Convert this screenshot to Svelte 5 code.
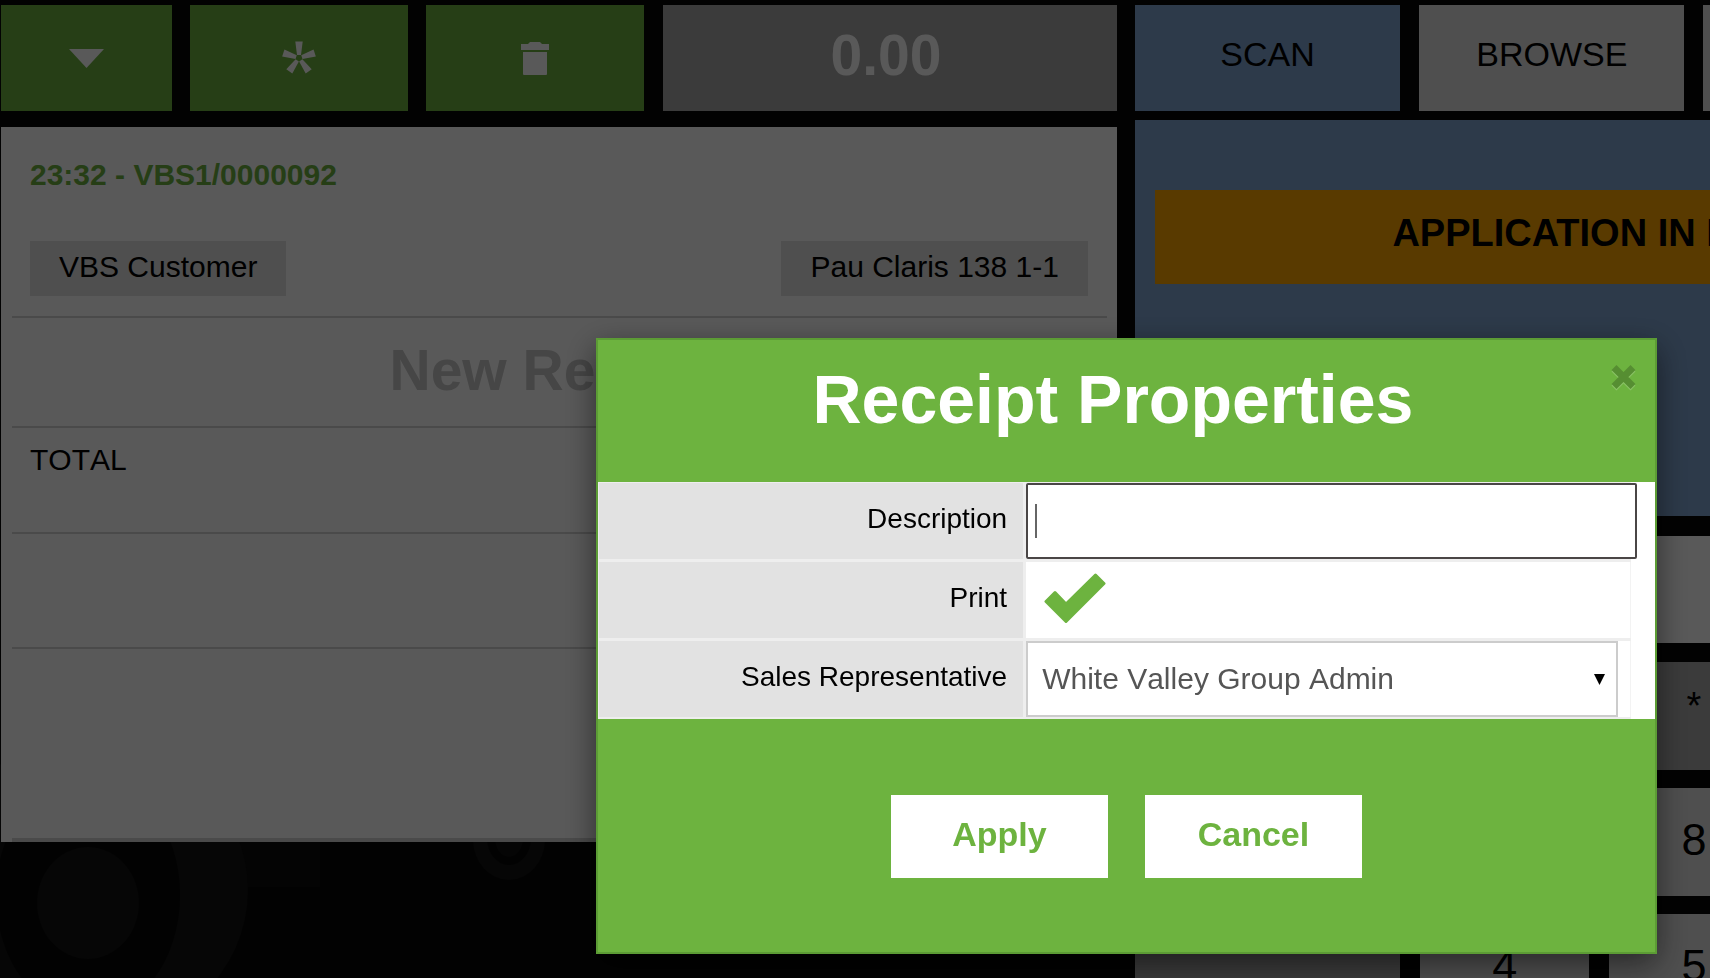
<script lang="ts">
	const tabs = ['SCAN', 'BROWSE', 'SEARCH', 'EDIT'];

	// null keeps a free slot in the grid
	const keys = [
		{ label: null, dark: true },
		{ label: null, dark: true },
		{ label: '*', dark: true },
		{ label: null, dark: true },
		{ label: null, dark: true },
		{ label: null, dark: true },
		{ label: '7' },
		{ label: '8' },
		{ label: '9' },
		{ label: null, dark: true },
		{ label: null, dark: true },
		{ label: '4' },
		{ label: '5' },
		{ label: '6' },
		{ label: null, dark: true }
	];

	let activeTab = $state('SCAN');
	let modalOpen = $state(true);
	let description = $state('');
	let print = $state(true);
	let representative = $state('White Valley Group Admin');

	function closeModal() {
		modalOpen = false;
	}
</script>

<div class="pos">
	<!-- faint pattern on the page background -->
	<svg class="pattern" width="700" height="978" viewBox="0 0 700 978" aria-hidden="true">
		<path d="M36 842h284v45H36z" fill="#0c0c0c" />
		<ellipse cx="88" cy="890" rx="160" ry="150" fill="#121212" />
		<ellipse cx="88" cy="895" rx="92" ry="120" fill="#070707" />
		<ellipse cx="88" cy="903" rx="51" ry="56" fill="#121212" />
		<ellipse cx="509" cy="840" rx="36" ry="40" fill="#121212" />
		<ellipse cx="509" cy="838" rx="22" ry="27" fill="#070707" />
		<ellipse cx="509" cy="838" rx="14" ry="19" fill="#101010" />
	</svg>

	<section class="left">
		<div class="toolbar">
			<button class="action" aria-label="Menu">
				<svg width="35" height="19" viewBox="0 0 35 19"><path d="M0 0h35L17.500 19z" fill="#fff" /></svg>
			</button>
			<button class="action" aria-label="New receipt">
				<svg width="34" height="34" viewBox="-17 -17 34 34" fill="#fff">
					{#each [0, 72, 144, 216, 288] as angle}
						<path d="M-2 -3L-3.700 -16.500H3.700L2 -3z" transform="rotate({angle})" />
					{/each}
				</svg>
			</button>
			<button class="action" aria-label="Delete receipt">
				<svg width="28" height="33" viewBox="0 0 28 33" fill="#fff">
					<path d="M0 2h7l2-2h10l2 2h7v6H0z" />
					<path d="M2 10h24v22a1 1 0 0 1-1 1H3a1 1 0 0 1-1-1z" />
				</svg>
			</button>
			<div class="amount">0.00</div>
		</div>

		<div class="receipt">
			<div class="line head">
				<div class="number">23:32 - VBS1/0000092</div>
				<div class="tags">
					<button class="tag">VBS Customer</button>
					<button class="tag">Pau Claris 138 1-1</button>
				</div>
			</div>
			<div class="line empty">New Receipt</div>
			<div class="line total">TOTAL</div>
			<div class="line taxes"></div>
			<div class="line payments"></div>
		</div>
	</section>

	<section class="right">
		<div class="tabs">
			{#each tabs as tab}
				<button class="tab" class:active={activeTab === tab} onclick={() => (activeTab = tab)}>
					{tab}
				</button>
			{/each}
		</div>
		<div class="scan">
			<div class="notice">APPLICATION IN DEVELOPMENT</div>
		</div>
		<div class="display"></div>
		<div class="keypad">
			{#each keys as key}
				<button class="key" class:dark={key.dark}>{key.label ?? ''}</button>
			{/each}
		</div>
	</section>
</div>

{#if modalOpen}
	<div class="scrim"></div>
	<div class="modal" role="dialog" aria-labelledby="modal-title">
		<header>
			<h1 id="modal-title">Receipt Properties</h1>
			<button class="close" aria-label="Close" onclick={closeModal}>
				<svg width="27" height="28" viewBox="0 0 27 28" fill="none" stroke-width="7">
					<path d="M4 5L23 24M23 5L4 24" stroke="#fff" />
					<path d="M4 3.500L23 22.500M23 3.500L4 22.500" stroke="#000" />
				</svg>
			</button>
		</header>
		<div class="body">
			<table>
				<tbody>
					<tr>
						<th><label for="description">Description</label></th>
						<td>
							<div class="field">
								<input id="description" type="text" bind:value={description} />
								{#if !description}<span class="caret"></span>{/if}
							</div>
						</td>
					</tr>
					<tr>
						<th><label for="print">Print</label></th>
						<td>
							<div class="check">
								<input id="print" type="checkbox" bind:checked={print} />
								{#if print}
									<svg width="62" height="51" viewBox="0 0 62 51" aria-hidden="true">
										<path
											d="M2 28.500L11 19.500L22 31L51.500 2L60 10.500L22 48.500z"
											fill="#6db33f"
											stroke="#6db33f"
											stroke-width="3"
											stroke-linejoin="round"
										/>
									</svg>
								{/if}
							</div>
						</td>
					</tr>
					<tr>
						<th><label for="representative">Sales Representative</label></th>
						<td>
							<div class="picker">
								<select id="representative" bind:value={representative}>
									<option>White Valley Group Admin</option>
								</select>
								<svg width="11" height="11" viewBox="0 0 11 11" aria-hidden="true">
									<path d="M0 0h11L5.500 11z" />
								</svg>
							</div>
						</td>
					</tr>
				</tbody>
			</table>
		</div>
		<footer>
			<button class="confirm" onclick={closeModal}>Apply</button>
			<button class="confirm" onclick={closeModal}>Cancel</button>
		</footer>
	</div>
{/if}

<style>
	:global(body) {
		background: #000;
		overflow: hidden;
	}

	.pos,
	.modal {
		font-family: 'Liberation Sans', Arial, Helvetica, sans-serif;
		font-size: 30px;
		font-kerning: none;
		color: #000;
	}

	button,
	input,
	select {
		box-sizing: border-box;
		margin: 0;
		padding: 0;
		border: 0;
		border-radius: 0;
		font-family: inherit;
		font-kerning: inherit;
		color: inherit;
	}

	/* the right half runs on past the window's edge */
	.pos {
		position: relative;
		display: grid;
		grid-template-columns: 65.26vw 65.38vw;
		gap: 18px;
		box-sizing: border-box;
		height: 100vh;
		padding: 5px 0 0 1px;
		overflow: hidden;
		background: #070707;
	}

	.pattern {
		position: absolute;
		left: 0;
		bottom: 0;
	}

	.left,
	.right {
		position: relative;
		min-width: 0;
	}

	/* left side */
	.toolbar {
		display: grid;
		grid-template-columns: 171fr 218fr 218fr 455fr;
		gap: 18px;
		height: 106px;
		margin-bottom: 16px;
	}

	.action,
	.amount {
		display: flex;
		align-items: center;
		justify-content: center;
	}

	.action {
		background: #6db33f;
	}

	.amount {
		padding: 0 8px 6px 0;
		margin-left: 1px;
		background: #a9a9a9;
		color: #fff;
		font-size: 57px;
		font-weight: bold;
	}

	.receipt {
		padding: 0 10px 0 11px;
		background: #fff;
	}

	.line {
		padding: 0 19px 0 18px;
		border-bottom: 2px solid #d3d3d3;
	}

	.head {
		padding-top: 28px;
		padding-bottom: 20px;
	}

	.number {
		margin-bottom: 46px;
		line-height: 40px;
		font-weight: bold;
		color: #6db33f;
	}

	.tags {
		display: flex;
		justify-content: space-between;
	}

	.tag {
		padding: 0 29px 4px;
		background: #e2e2e2;
		font-size: 30px;
		line-height: 51px;
	}

	.empty {
		padding-bottom: 4px;
		line-height: 104px;
		text-align: center;
		font-size: 57px;
		font-weight: bold;
		color: #c8c8c8;
	}

	.total {
		padding-top: 12px;
		padding-bottom: 52px;
		line-height: 40px;
	}

	.taxes {
		height: 113px;
	}

	.payments {
		height: 189px;
		border-bottom-width: 4px;
	}

	/* right side */
	.tabs {
		display: grid;
		grid-template-columns: repeat(4, 1fr);
		gap: 19px;
		height: 106px;
		margin-bottom: 9px;
	}

	.tab {
		padding-bottom: 8px;
		background: #e2e2e2;
		font-size: 34px;
	}

	.tab.active {
		background: #81a6d3;
	}

	.scan {
		height: 326px;
		padding: 70px 20px 0;
		margin-bottom: 20px;
		background: #81a6d3;
	}

	.notice {
		padding-bottom: 8px;
		background: #ffa500;
		font-size: 38px;
		font-weight: bold;
		font-kerning: normal;
		line-height: 86px;
		text-align: center;
		white-space: nowrap;
	}

	.display {
		height: 107px;
		margin-bottom: 19px;
		background: #fff;
	}

	.keypad {
		display: grid;
		grid-template-columns: 265fr 169fr 169fr 169fr 265fr;
		grid-auto-rows: 108px;
		gap: 18px 20px;
	}

	.key {
		padding-bottom: 4px;
		background: #e2e2e2;
		font-size: 45px;
	}

	.key.dark {
		padding-bottom: 20px;
		background: #a9a9a9;
		font-size: 38px;
	}

	/* dialog */
	.scrim {
		position: fixed;
		inset: 0;
		background: rgba(0, 0, 0, 0.65);
	}

	.modal {
		position: fixed;
		top: 338px;
		left: 34.85vw;
		box-sizing: border-box;
		width: 62.05vw;
		border: 2px solid #5c9c35;
		background: #6db33f;
		box-shadow: 0 10px 30px rgba(0, 0, 0, 0.5);
	}

	header {
		display: flex;
		align-items: flex-start;
		padding: 13px 18px 37px;
	}

	h1 {
		flex: 1;
		margin: 0;
		color: #fff;
		font-size: 68px;
		line-height: 92px;
		text-align: center;
	}

	.close {
		display: flex;
		padding-top: 11px;
		background: none;
		opacity: 0.2;
	}

	.body {
		padding-right: 24px;
		background: #fff;
	}

	table {
		width: 100%;
		border-collapse: collapse;
		table-layout: fixed;
	}

	th,
	td {
		box-sizing: border-box;
		padding: 0;
		border: 3px solid #eee;
	}

	th {
		width: 41.3%;
		padding-right: 16px;
		border-left-width: 1px;
		background: #e2e2e2;
		font-size: 28px;
		font-weight: normal;
		text-align: right;
	}

	td {
		border-right: 1px solid #f3f3f3;
	}

	tr:first-child > * {
		border-top-width: 1px;
	}

	tr:last-child > * {
		border-bottom-width: 2px;
	}

	th label {
		display: block;
		padding-bottom: 4px;
	}

	.field,
	.check,
	.picker {
		position: relative;
		display: flex;
		align-items: center;
		height: 76px;
	}

	.field {
		margin-right: -7px;
	}

	.field input {
		width: 100%;
		height: 76px;
		padding: 0 10px;
		border: 2px solid #4a4646;
		border-radius: 2px;
		background: #fff;
		font-size: 30px;
		outline: none;
	}

	.caret {
		position: absolute;
		left: 9px;
		width: 2px;
		height: 34px;
		background: #666;
	}

	.check {
		padding-left: 18px;
	}

	.check input {
		appearance: none;
		position: absolute;
		width: 62px;
		height: 51px;
	}

	.check svg {
		padding-bottom: 4px;
		pointer-events: none;
	}

	.picker {
		margin-right: 12px;
	}

	.picker select {
		appearance: none;
		width: 100%;
		height: 76px;
		padding: 0 40px 2px 14px;
		border: 2px solid #ccc;
		background: #fff;
		color: #555;
		font-size: 30px;
	}

	.picker svg {
		position: absolute;
		right: 13px;
		pointer-events: none;
	}

	footer {
		display: flex;
		justify-content: center;
		gap: 37px;
		padding: 76px 0 74px;
	}

	.confirm {
		min-width: 217px;
		height: 83px;
		padding-bottom: 4px;
		background: #fff;
		color: #6db33f;
		font-size: 34px;
		font-weight: bold;
	}
</style>
